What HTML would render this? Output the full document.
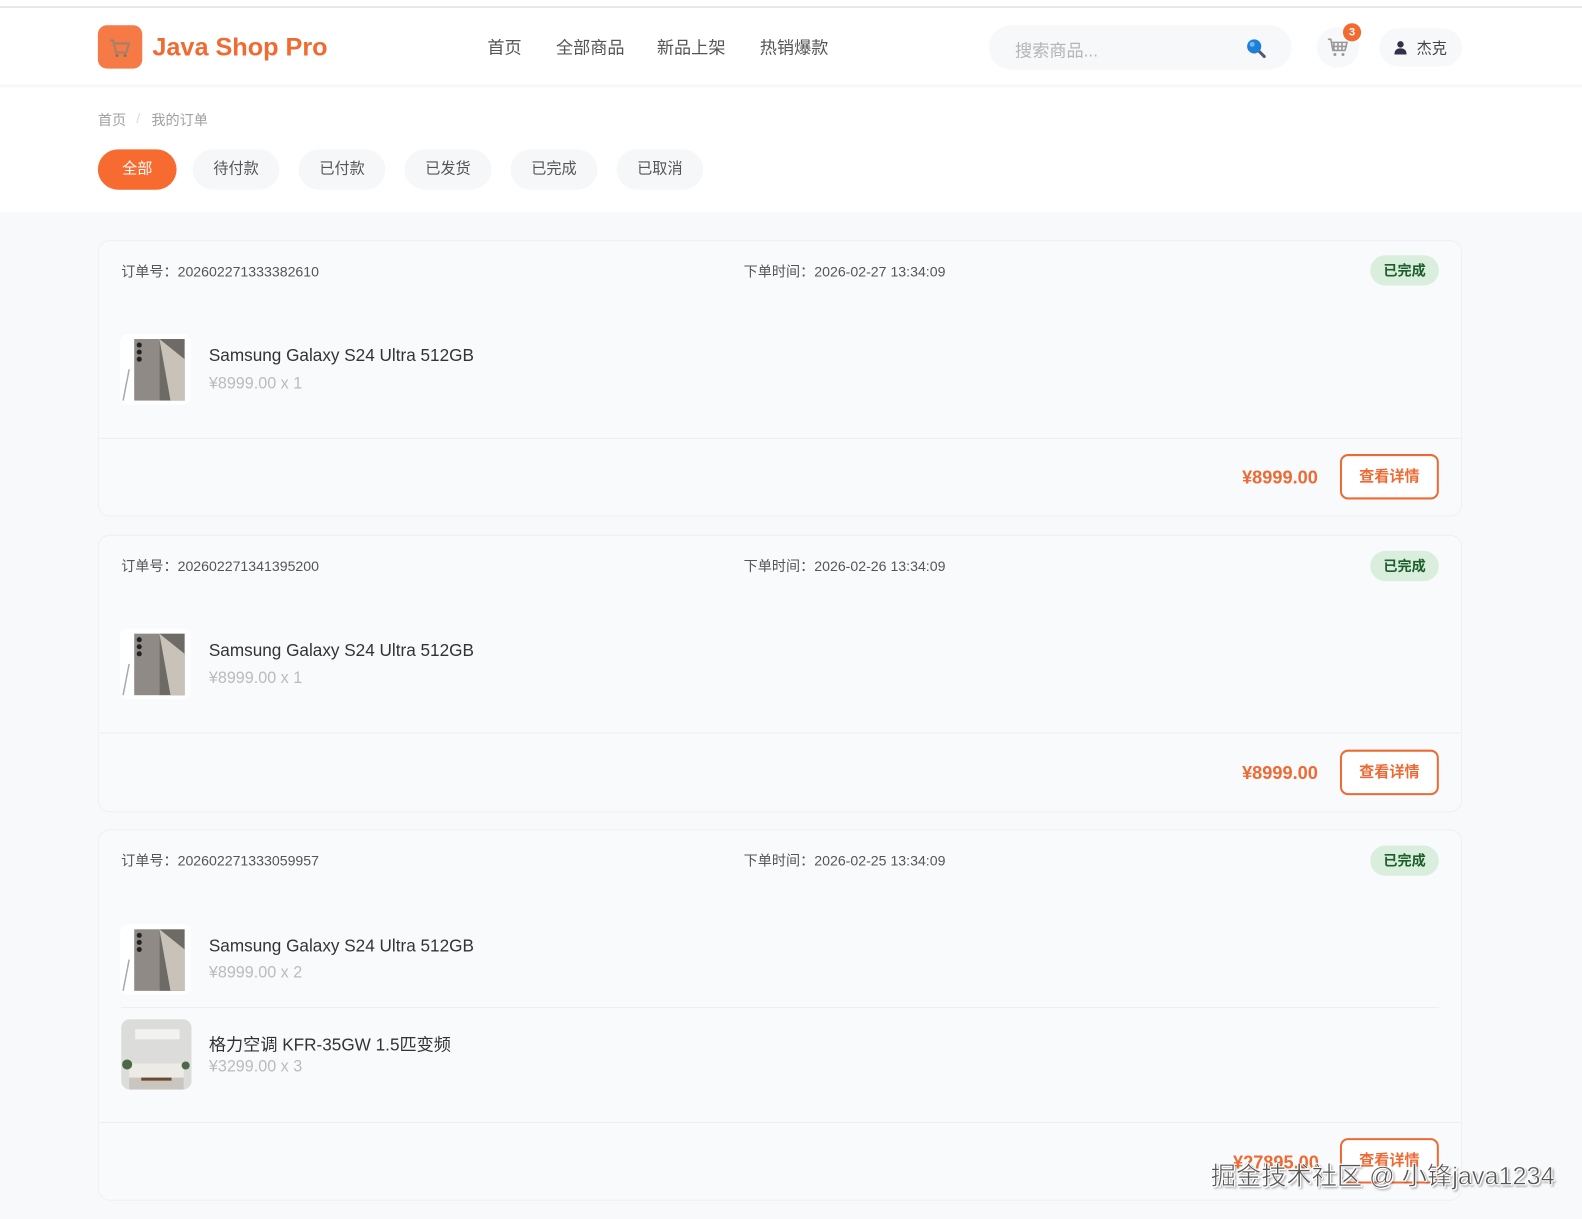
<!DOCTYPE html>
<html><head><meta charset="utf-8"><style>
*{margin:0;padding:0;box-sizing:border-box}
body{width:1582px;height:1219px;overflow:hidden;background:#f7f9fb;font-family:"Liberation Sans","Noto Sans CJK SC",sans-serif;position:relative;color:#333}
#w{position:absolute;left:0;top:0;width:1568px;height:1208px;transform:scale(1.009);transform-origin:0 0}
.abs{position:absolute}
.top{left:0;top:0;width:1582px;height:210px;background:#fff}
.line{left:0;top:6px;width:1582px;height:2px;background:#e8e8e8}
.hdrsh{left:0;top:84px;width:1582px;height:4px;background:linear-gradient(#f4f5f7,#fff)}
.logo{left:97px;top:25px;width:44px;height:43px;border-radius:9px;background:#f57a45}
.brand{left:151px;top:33px;font-size:25px;font-weight:bold;color:#f06a32}
.nav{top:33px;font-size:17px;color:#555}
.search{left:980px;top:25px;width:300px;height:44px;border-radius:22px;background:#f6f8fa}
.search span{position:absolute;left:26px;top:11px;font-size:17px;color:#b5b5b5}
.cart{left:1305px;top:27px;width:42px;height:40px;border-radius:20px;background:#f6f8fa}
.badge{left:1331px;top:23px;width:18px;height:18px;border-radius:9px;background:#f06a32;color:#fff;font-size:11px;font-weight:bold;text-align:center;line-height:18px}
.user{left:1367px;top:28px;width:82px;height:38px;border-radius:19px;background:#f6f8fa;font-size:15px;color:#444}
.bc{top:109px;font-size:14px;color:#a0a0a0}
.tab{top:148px;height:40px;border-radius:20px;background:#f5f7f9;font-size:15px;color:#555;text-align:center;line-height:40px}
.tab.on{background:#f76b31;color:#fff}
.card{left:97px;width:1352px;background:#f9fafb;border:1px solid #eef0f2;border-radius:12px}
.oh{font-size:14px;color:#555}
.st{width:68px;height:30px;border-radius:15px;background:#d9eedd;color:#1e5e2c;font-size:14px;font-weight:bold;text-align:center;line-height:30px}
.img{width:70px;height:70px;border-radius:8px;background:#fff;overflow:hidden}
.pn{font-size:17px;color:#333}
.pp{font-size:16px;color:#bbb}
.div{height:1px;background:#eceef0}
.tot{font-size:18px;font-weight:bold;color:#ee6a34}
.btn{width:98px;height:45px;border:2px solid #ee6a34;border-radius:8px;color:#ee6a34;font-size:15px;font-weight:bold;text-align:center;line-height:41px;background:#fff}
.wm{left:1200px;top:1146px;font-size:25px;color:#555;-webkit-text-stroke:0.5px #fff;text-shadow:1px 1px 0 #fff,-1px -1px 0 #fff,2px 2px 2px rgba(0,0,0,.4)}
</style></head><body><div id="w">
<div class="abs top"></div>
<div class="abs line"></div>
<div class="abs hdrsh"></div>
<div class="abs logo"><svg width="44" height="43" viewBox="0 0 44 43"><path d="M12 15h3l3 12h10l3-9H17" fill="none" stroke="#a0806a" stroke-width="2"/><circle cx="19" cy="30" r="1.5" fill="#8a7060"/><circle cx="27" cy="30" r="1.5" fill="#8a7060"/></svg></div>
<div class="abs brand">Java Shop Pro</div>
<div class="abs nav" style="left:483px">首页</div>
<div class="abs nav" style="left:551px">全部商品</div>
<div class="abs nav" style="left:651px">新品上架</div>
<div class="abs nav" style="left:753px">热销爆款</div>
<div class="abs search"><span>搜索商品...</span><svg class="abs" style="left:254px;top:12px" width="22" height="22" viewBox="0 0 22 22"><line x1="13" y1="13" x2="19" y2="19" stroke="#555a70" stroke-width="3" stroke-linecap="round"/><circle cx="9" cy="9" r="7" fill="#1e7fd8"/><circle cx="7" cy="7" r="2.5" fill="#6cb8f0"/></svg></div>
<div class="abs cart"><svg class="abs" style="left:10px;top:10px" width="22" height="20" viewBox="0 0 22 20"><path d="M1 2h3l2 11h12l2-8H5M7 5v8M11 5v8M15 5v8M5 9h15" fill="none" stroke="#999" stroke-width="1.6"/><circle cx="8" cy="17" r="1.5" fill="#999"/><circle cx="16" cy="17" r="1.5" fill="#999"/></svg></div>
<div class="abs badge">3</div>
<div class="abs user"><svg class="abs" style="left:15px;top:12px" width="12" height="14" viewBox="0 0 12 14"><circle cx="6" cy="4" r="3.2" fill="#33304a"/><path d="M0 14c0-5 3-6 6-6s6 1 6 6z" fill="#33304a"/></svg><span class="abs" style="left:37px;top:9px">杰克</span></div>
<div class="abs bc" style="left:97px">首页</div>
<div class="abs bc" style="left:135px;color:#ddd">/</div>
<div class="abs bc" style="left:150px">我的订单</div>
<div class="abs tab on" style="left:97px;width:78px">全部</div>
<div class="abs tab" style="left:191px;width:86px">待付款</div>
<div class="abs tab" style="left:296px;width:86px">已付款</div>
<div class="abs tab" style="left:401px;width:86px">已发货</div>
<div class="abs tab" style="left:506px;width:86px">已完成</div>
<div class="abs tab" style="left:611px;width:86px">已取消</div>

<div class="abs card" style="top:238px;height:274px"></div>
<div class="abs card" style="top:530px;height:275px"></div>
<div class="abs card" style="top:822px;height:368px"></div>

<div class="abs oh" style="left:120px;top:259px">订单号：202602271333382610</div>
<div class="abs oh" style="left:737px;top:259px">下单时间：2026-02-27 13:34:09</div>
<div class="abs st" style="left:1358px;top:253px">已完成</div>
<div class="abs img" style="left:119px;top:331px"><svg width="70" height="70"><rect x="14" y="5" width="25" height="61" fill="#8f8a85"/><rect x="39" y="5" width="25" height="61" fill="#6e6a66"/><path d="M39 5l25 20v41H50z" fill="#c8c2b8"/><circle cx="19" cy="11" r="2.5" fill="#222"/><circle cx="19" cy="18" r="2.5" fill="#222"/><circle cx="19" cy="25" r="2.5" fill="#222"/><line x1="3" y1="66" x2="9" y2="35" stroke="#aaa" stroke-width="1.5"/></svg></div>
<div class="abs pn" style="left:207px;top:343px">Samsung Galaxy S24 Ultra 512GB</div>
<div class="abs pp" style="left:207px;top:372px">¥8999.00 x 1</div>
<div class="abs div" style="left:98px;top:434px;width:1350px"></div>
<div class="abs tot" style="left:1231px;top:463px">¥8999.00</div>
<div class="abs btn" style="left:1328px;top:450px">查看详情</div>

<div class="abs oh" style="left:120px;top:551px">订单号：202602271341395200</div>
<div class="abs oh" style="left:737px;top:551px">下单时间：2026-02-26 13:34:09</div>
<div class="abs st" style="left:1358px;top:546px">已完成</div>
<div class="abs img" style="left:119px;top:623px"><svg width="70" height="70"><rect x="14" y="5" width="25" height="61" fill="#8f8a85"/><rect x="39" y="5" width="25" height="61" fill="#6e6a66"/><path d="M39 5l25 20v41H50z" fill="#c8c2b8"/><circle cx="19" cy="11" r="2.5" fill="#222"/><circle cx="19" cy="18" r="2.5" fill="#222"/><circle cx="19" cy="25" r="2.5" fill="#222"/><line x1="3" y1="66" x2="9" y2="35" stroke="#aaa" stroke-width="1.5"/></svg></div>
<div class="abs pn" style="left:207px;top:635px">Samsung Galaxy S24 Ultra 512GB</div>
<div class="abs pp" style="left:207px;top:664px">¥8999.00 x 1</div>
<div class="abs div" style="left:98px;top:726px;width:1350px"></div>
<div class="abs tot" style="left:1231px;top:756px">¥8999.00</div>
<div class="abs btn" style="left:1328px;top:743px">查看详情</div>

<div class="abs oh" style="left:120px;top:843px">订单号：202602271333059957</div>
<div class="abs oh" style="left:737px;top:843px">下单时间：2026-02-25 13:34:09</div>
<div class="abs st" style="left:1358px;top:838px">已完成</div>
<div class="abs img" style="left:119px;top:916px"><svg width="70" height="70"><rect x="14" y="5" width="25" height="61" fill="#8f8a85"/><rect x="39" y="5" width="25" height="61" fill="#6e6a66"/><path d="M39 5l25 20v41H50z" fill="#c8c2b8"/><circle cx="19" cy="11" r="2.5" fill="#222"/><circle cx="19" cy="18" r="2.5" fill="#222"/><circle cx="19" cy="25" r="2.5" fill="#222"/><line x1="3" y1="66" x2="9" y2="35" stroke="#aaa" stroke-width="1.5"/></svg></div>
<div class="abs pn" style="left:207px;top:928px">Samsung Galaxy S24 Ultra 512GB</div>
<div class="abs pp" style="left:207px;top:956px">¥8999.00 x 2</div>
<div class="abs div" style="left:120px;top:998px;width:1306px"></div>
<div class="abs img" style="left:120px;top:1010px;border-radius:9px"><svg width="70" height="70"><rect width="70" height="70" fill="#dcdcda"/><rect x="14" y="10" width="44" height="10" fill="#f2f2f0"/><rect x="8" y="44" width="54" height="14" fill="#ecebe6"/><rect x="8" y="58" width="54" height="12" fill="#c9c6c0"/><circle cx="6" cy="45" r="5" fill="#4a6a45"/><circle cx="64" cy="46" r="4" fill="#4a6a45"/><rect x="20" y="58" width="30" height="3" fill="#6a4a30"/></svg></div>
<div class="abs pn" style="left:207px;top:1021px">格力空调 KFR-35GW 1.5匹变频</div>
<div class="abs pp" style="left:207px;top:1049px">¥3299.00 x 3</div>
<div class="abs div" style="left:98px;top:1112px;width:1350px"></div>
<div class="abs tot" style="left:1222px;top:1142px">¥27895.00</div>
<div class="abs btn" style="left:1328px;top:1128px">查看详情</div>

<div class="abs wm">掘金技术社区 @ 小锋java1234</div>
</div></body></html>
